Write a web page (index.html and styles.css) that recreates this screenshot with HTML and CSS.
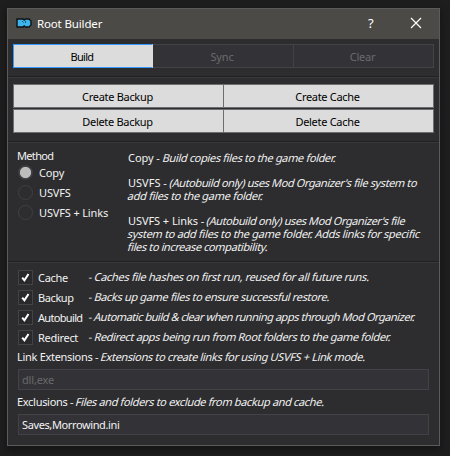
FILE: index.html
```html
<!DOCTYPE html>
<html lang="en">
<head>
<meta charset="utf-8">
<title>Root Builder</title>
<link rel="stylesheet" href="styles.css">
</head>
<body>
<div class="window">
  <header class="titlebar">
    <svg class="logo" width="16" height="10" viewBox="0 0 16 10"><path d="M1 1H7.2L8.2 2L9.5 1H13L15 3V7L13 9H9.5L8.2 8L7.2 9H1Z" fill="#3db5ec" stroke="#0d1114" stroke-width="1.4"/><path d="M6.2 3.2L7.5 4.5M9.5 3.2V4.8" stroke="#16425a" stroke-width="1"/></svg>
    <h1 class="title">Root Builder</h1>
    <span class="help">?</span>
    <svg class="close" width="12" height="12" viewBox="0 0 12 12"><path d="M1 1L11 11M11 1L1 11" stroke="#fff" stroke-width="1.2"/></svg>
  </header>
  <nav class="tabs">
    <button class="tab active">Build</button>
    <button class="tab sync">Sync</button>
    <button class="tab clear">Clear</button>
  </nav>
  <section class="actions">
    <button class="s3">Create Backup</button><button class="s3">Create Cache</button>
    <button class="s3">Delete Backup</button><button class="s3">Delete Cache</button>
  </section>
  <section class="method">
    <div class="choices">
      <div class="s7">Method</div>
      <label class="row"><i class="radio on"></i><span class="s1">Copy</span></label>
      <label class="row"><i class="radio"></i><span class="s1">USVFS</span></label>
      <label class="row"><i class="radio"></i><span class="s1">USVFS + Links</span></label>
    </div>
    <div class="notes">
      <p><span class="s0">Copy - </span><em class="s35">Build copies files to the game folder.</em></p>
      <p><span>USVFS - </span><em class="s4">(Autobuild only) uses Mod Organizer's file system to</em><br><em class="s3">add files to the game folder.</em></p>
      <p><span class="s0">USVFS + Links - </span><em class="s4">(Autobuild only) uses Mod Organizer's file</em><br><em class="s3">system to add files to the game folder. Adds links for specific</em><br><em class="s38">files to increase compatibility.</em></p>
    </div>
  </section>
  <section class="options">
    <div class="row"><i class="check"><svg viewBox="0 0 13 13"><path d="M3.2 6.7L5.4 9.3L9.5 3" /></svg></i><span class="name s3">Cache</span><em class="s3">- Caches file hashes on first run, reused for all future runs.</em></div>
    <div class="row"><i class="check"><svg viewBox="0 0 13 13"><path d="M3.2 6.7L5.4 9.3L9.5 3" /></svg></i><span class="name s4">Backup</span><em class="s35">- Backs up game files to ensure successful restore.</em></div>
    <div class="row"><i class="check"><svg viewBox="0 0 13 13"><path d="M3.2 6.7L5.4 9.3L9.5 3" /></svg></i><span class="name s7">Autobuild</span><em class="s47">- Automatic build &amp; clear when running apps through Mod Organizer.</em></div>
    <div class="row"><i class="check"><svg viewBox="0 0 13 13"><path d="M3.2 6.7L5.4 9.3L9.5 3" /></svg></i><span class="name s3">Redirect</span><em class="s35">- Redirect apps being run from Root folders to the game folder.</em></div>
    <p class="field"><span class="s3">Link Extensions - </span><em class="s35">Extensions to create links for using USVFS + Link mode.</em></p>
    <div class="input disabled s1">dll,exe</div>
    <p class="field"><span class="s3">Exclusions - </span><em class="s35">Files and folders to exclude from backup and cache.</em></p>
    <div class="input s38">Saves,Morrowind.ini</div>
  </section>
</div>
</body>
</html>
```
FILE: styles.css
```css
* { box-sizing: border-box; margin: 0; padding: 0; }
body {
  width: 450px; height: 456px; overflow: hidden;
  padding: 8px 0 0 7px;
  background: #1e1e1e;
  font: 11px/13px "Noto Sans", sans-serif;
  color: #f2f2f2;
}
.window {
  width: 433px; height: 438px;
  border: 1px solid #5b5b5b;
  background: #2d2d2f;
  box-shadow: 0 3px 8px 1px rgba(0, 0, 0, .35);
}
.titlebar {
  height: 30px; padding: 0 17px 2px 8px;
  display: flex; align-items: center;
  background: #4c4a47;
}
.logo { margin-right: 5px; }
.title { flex: 1; font-size: 11.5px; font-weight: 400; letter-spacing: -.15px; color: #fff; }
.help { width: 8px; margin-right: 34px; font-size: 13px; color: #fff; }

button {
  font: inherit; color: #000;
  background: #dcdcdc; border: 1px solid #6e6e70;
  padding-right: 2px;
  text-align: center;
}
.tabs {
  display: grid; grid-template-columns: 140px 141px 140px;
  height: 38px; padding: 5px 5px 9px;
  border-bottom: 1px solid #202021;
}
.tabs .tab { height: 24px; background: #333237; border-color: #434247; color: #6b6b6c; letter-spacing: -.2px; }
.tabs .active { background: #dcdcdc; border-color: #3399ff; border-right-color: #dcdcdc; color: #000; letter-spacing: -.7px; }
.tabs .sync, .tabs .clear { border-left: 0; }
.actions {
  display: grid; grid-template-columns: 211px 211px; grid-auto-rows: 24px; row-gap: 1px;
  height: 65px; padding: 6px 5px 0;
  border-top: 1px solid #39393b;
  border-bottom: 1px solid #202021;
}
.actions button:nth-child(even) { width: 211px; margin-left: -1px; }

.method {
  display: flex; height: 120px; padding: 6px 0 0 9px;
  border-top: 1px solid #39393b;
  border-bottom: 1px solid #202021;
}
.choices { width: 111px; }
.choices > div { height: 14px; }
.row { display: flex; align-items: flex-start; height: 20px; white-space: pre; }
.row span { margin-top: 3px; }
.radio {
  width: 15px; height: 15px; margin: 2px 6px 0 1px;
  border: 1px solid #403f44; border-radius: 50%;
}
.radio.on { background: radial-gradient(circle, #bdbdbd 0 5.2px, #403f46 6px); }
.notes { padding-top: 2px; white-space: nowrap; }
.notes p { margin-bottom: 12px; }
.notes span, .field span { white-space: pre; }
em {
  display: inline-block; vertical-align: top; height: 13px;
  font-style: normal; white-space: pre;
  transform: skewX(-15deg);
}

.options { padding: 5px 9px 0; border-top: 1px solid #39393b; }
.check {
  width: 15px; height: 15px; margin: 2px 5px 0 1px;
  border: 1px solid #434247; background: #29292b;
}
.check svg { display: block; width: 13px; height: 13px; }
.check path { fill: none; stroke: #fff; stroke-width: 2; }
.name { width: 51px; }
.row em { margin-top: 2px; }
.field { height: 21px; padding-top: 2px; white-space: nowrap; }
.input {
  height: 21px; margin: 0 0 3px 1px; width: 411px;
  padding: 3px 0 0 3px;
  border: 1px solid #434247; background: #333237;
}
.disabled { color: #69696a; }

.s0 { letter-spacing: -.07px; }
.s1 { letter-spacing: -.15px; }
.s3 { letter-spacing: -.3px; }
.s35 { letter-spacing: -.35px; }
.s38 { letter-spacing: -.38px; }
.s4 { letter-spacing: -.4px; }
.s47 { letter-spacing: -.47px; }
.s7 { letter-spacing: -.67px; }
```
